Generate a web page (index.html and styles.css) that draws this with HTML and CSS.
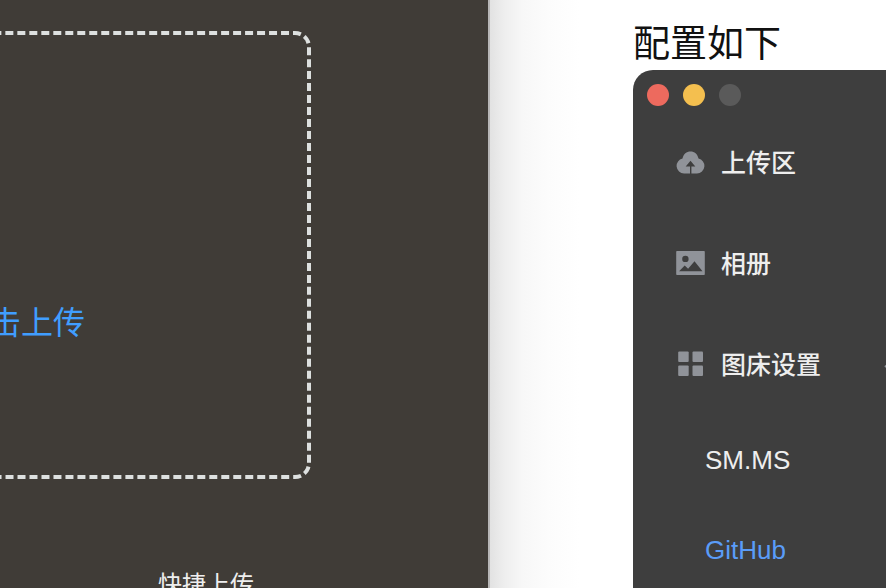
FILE: index.html
```html
<!DOCTYPE html>
<html lang="zh-CN">
<head>
<meta charset="utf-8">
<title>PicGo</title>
<link rel="stylesheet" href="styles.css">
</head>
<body>
<main class="page">
  <section class="upload">
    <div class="dropzone"><a class="pick" href="#">击上传</a></div>
    <h2 class="quick">快捷上传</h2>
  </section>
  <section class="doc">
    <p class="caption">配置如下</p>
    <div class="window">
      <div class="lights">
        <span class="light close"></span>
        <span class="light minimize"></span>
        <span class="light zoom"></span>
      </div>
      <nav class="menu">
        <a class="item" href="#">
          <svg class="icon" viewBox="0 0 30 30" aria-hidden="true"><path fill-rule="evenodd" d="M14 26.500H8A7.600 7.600 0 0 1 6.500 11.500C7.500 7 10.500 4.500 14.500 4.500S21.500 7 22.500 11.500A7.600 7.600 0 0 1 21 26.500H15.400V19.500H19.300L14.500 13.800L9.700 19.500H14Z"/></svg>
          <span class="label">上传区</span>
        </a>
        <a class="item" href="#">
          <svg class="icon" viewBox="0 0 30 30" aria-hidden="true"><path fill-rule="evenodd" d="M1 3H28Q28.800 3 28.800 3.800V26.200Q28.800 27 28 27H1Q.2 27 .2 26.200V3.800Q.2 3 1 3ZM9.400 7.700A3.200 3.200 0 1 0 9.400 14.100A3.200 3.200 0 1 0 9.400 7.700ZM3.100 23.200H26.500L18.500 13.300L12.100 20.800L8.700 17.600Z"/></svg>
          <span class="label">相册</span>
        </a>
        <a class="item" href="#">
          <svg class="icon" viewBox="0 0 30 30" aria-hidden="true"><rect x="2.200" y="2.500" width="10.500" height="10.500" rx="1"/><rect x="16.500" y="2.500" width="10.500" height="10.500" rx="1"/><rect x="2.200" y="16.500" width="10.500" height="10.500" rx="1"/><rect x="16.500" y="16.500" width="10.500" height="10.500" rx="1"/></svg>
          <span class="label">图床设置</span>
          <svg class="arrow" viewBox="0 0 18 10" aria-hidden="true"><path d="M1 8L9 1L17 8"/></svg>
        </a>
        <a class="subitem" href="#">SM.MS</a>
        <a class="subitem active" href="#">GitHub</a>
      </nav>
    </div>
  </section>
</main>
</body>
</html>
```
FILE: styles.css
```css
* {
  box-sizing: border-box;
}

body {
  margin: 0;
  background: #fff;
  font-family: "Liberation Sans", "Noto Sans CJK SC", sans-serif;
}

a {
  text-decoration: none;
}

.page {
  display: grid;
  grid-template-columns: 490fr 396fr;
  height: 100vh;
  overflow: hidden;
}

.upload {
  min-width: 0;
  overflow: hidden;
  padding-top: 31px;
  background: #403c37;
  border-right: 2px solid #b8b7b7;
}

.dropzone {
  display: flex;
  align-items: center;
  justify-content: flex-end;
  height: 448px;
  margin: 0 177px 0 -586px;
  padding: 136px 222px 0 0;
  border: 4px dashed #dde0df;
  border-radius: 16px;
}

.pick {
  color: #409eff;
  font-size: 32px;
  font-weight: 400;
  line-height: 48px;
}

.quick {
  margin: 88px 0 0 158px;
  color: #eee;
  font-size: 24px;
  font-weight: 400;
  line-height: 36px;
  white-space: nowrap;
}

.doc {
  display: flex;
  flex-direction: column;
  min-width: 0;
  padding: 20px 0 0 143px;
  background: linear-gradient(to right, #e2e2e2 0, #eee 14px, #f7f7f7 32px, #fcfcfc 58px, #fff 90px);
}

.caption {
  margin: 0;
  color: #111;
  font-size: 37px;
  font-weight: 400;
  line-height: 50px;
  white-space: nowrap;
}

.window {
  flex: 1;
  padding: 14px 0 0 14px;
  background: #3e3e3e;
  border-top-left-radius: 20px;
  overflow: hidden;
}

.lights {
  display: flex;
  gap: 14px;
}

.light {
  width: 22px;
  height: 22px;
  border-radius: 50%;
}

.close {
  background: #ed6a5e;
}

.minimize {
  background: #f4bf4f;
}

.zoom {
  background: #5a5a5a;
}

.menu {
  display: flex;
  flex-direction: column;
  padding: 5px 0 0 29px;
}

.item {
  display: flex;
  align-items: center;
  height: 101px;
  color: #eee;
  font-size: 25px;
  font-weight: 500;
  white-space: nowrap;
}

.icon {
  flex: none;
  width: 30px;
  height: 30px;
  margin-right: 15px;
  fill: #909399;
}

.label {
  padding-bottom: 1px;
}

.arrow {
  flex: none;
  width: 18px;
  height: 10px;
  margin-left: 63px;
  fill: none;
  stroke: #909399;
  stroke-width: 2;
}

.subitem {
  height: 90px;
  padding-left: 29px;
  color: #eee;
  font-size: 26px;
  line-height: 92px;
}

.active {
  color: #5a9cf8;
}
```
